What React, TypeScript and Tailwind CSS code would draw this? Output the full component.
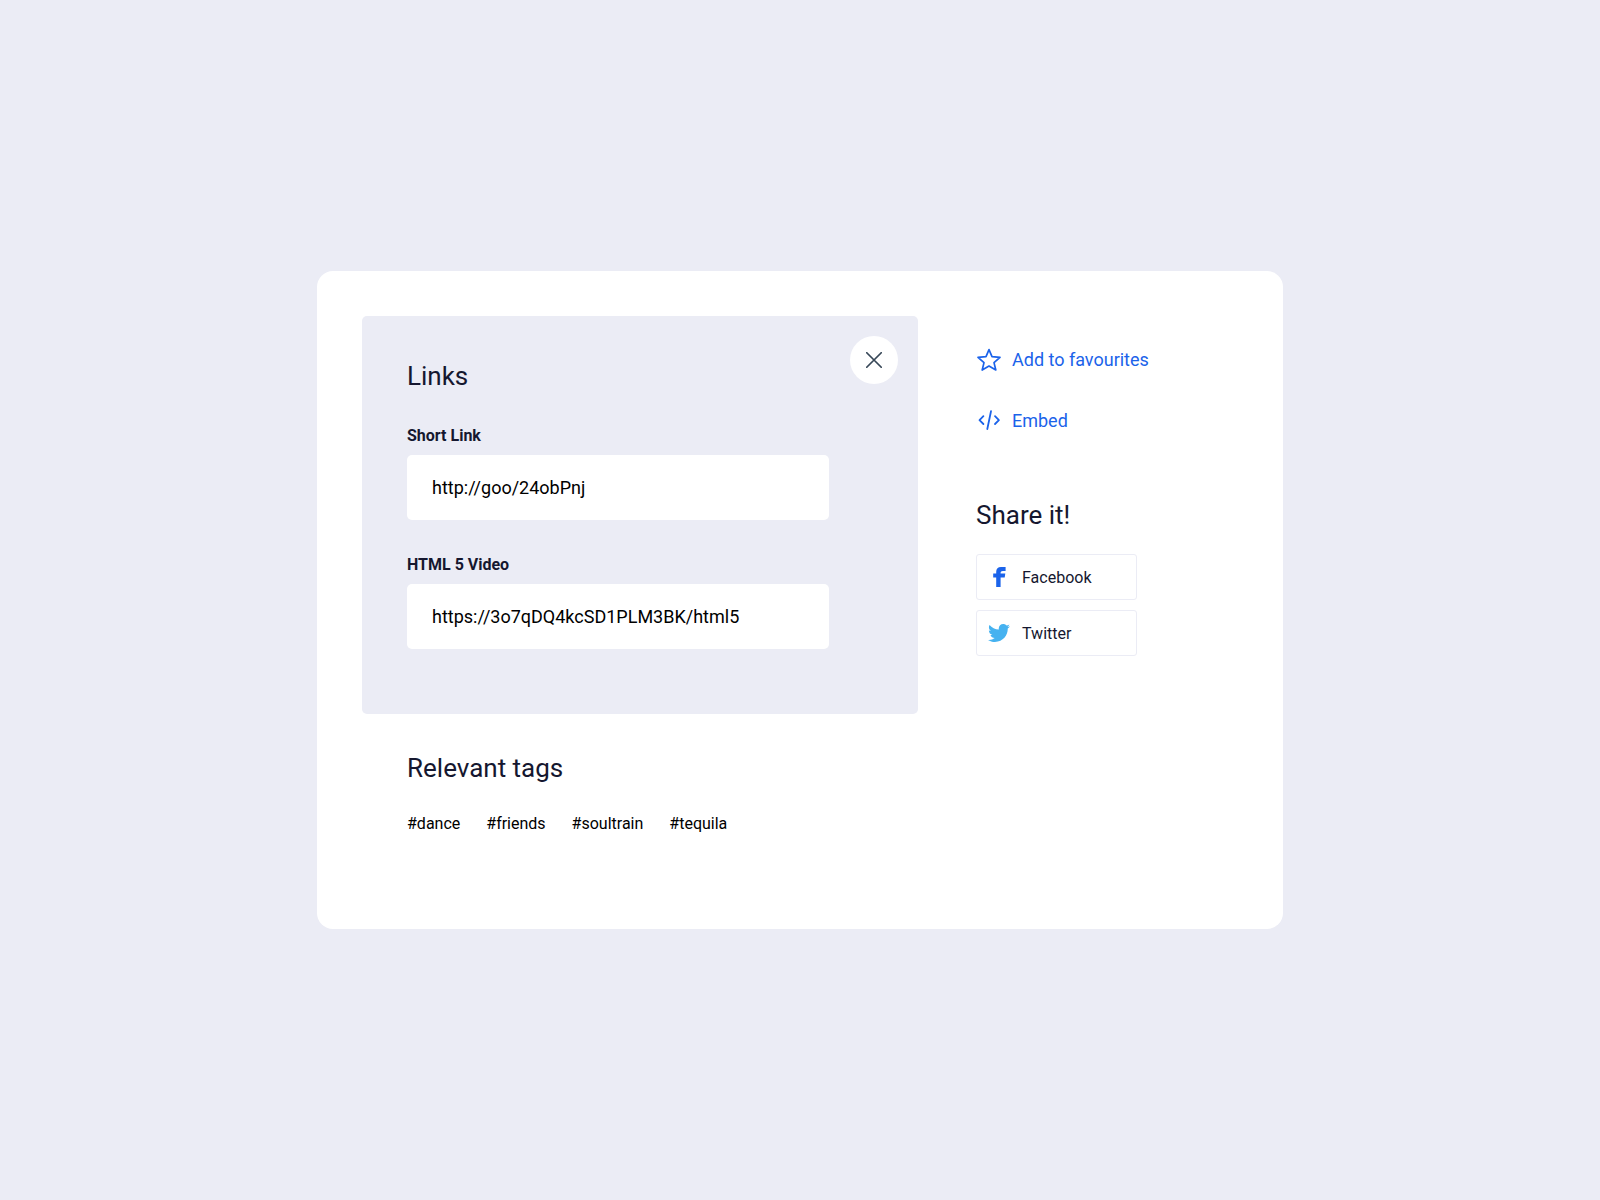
import React from "react";
import { FaTwitter } from "react-icons/fa";

const links = [
  { id: "short-link", label: "Short Link", value: "http://goo/24obPnj" },
  {
    id: "html5-video",
    label: "HTML 5 Video",
    value: "https://3o7qDQ4kcSD1PLM3BK/html5",
  },
];

const tags = ["#dance", "#friends", "#soultrain", "#tequila"];

const StarIcon = () => (
  <svg
    className="h-6 w-[26px]"
    viewBox="0 0 26 24"
    fill="none"
    stroke="currentColor"
    strokeWidth="1.7"
    strokeLinejoin="round"
    aria-hidden="true"
  >
    <path d="M13 1.6l3 7.1 8 .7-6 5.2 1.8 7.4-6.8-3.9L6.2 22 8 14.600 2 9.400l8-.7z" />
  </svg>
);

const CodeIcon = () => (
  <svg
    className="h-6 w-[26px]"
    viewBox="0 0 26 24"
    fill="none"
    stroke="currentColor"
    strokeWidth="1.8"
    strokeLinecap="round"
    strokeLinejoin="round"
    aria-hidden="true"
  >
    <path d="M7.4 7.200L3.500 11.100l3.900 3.900M19 7.200l3.900 3.900-3.900 3.900M15 2.200l-3.700 17.800" />
  </svg>
);

const CloseIcon = () => (
  <svg
    className="h-4 w-4"
    viewBox="0 0 16 16"
    fill="none"
    stroke="currentColor"
    strokeWidth="1.7"
    strokeLinecap="round"
    aria-hidden="true"
  >
    <path d="M.75.75l14.5 14.5M15.25.75L.75 15.25" />
  </svg>
);

const FacebookIcon = () => (
  <svg
    className="h-[22px] w-[22px]"
    viewBox="0 0 22 22"
    fill="currentColor"
    aria-hidden="true"
  >
    <path d="M8.200 21V11.400H5.200V7.600h3V5.800C8.200 2.700 10 1 13 1h4.600v3.900h-2.700c-1.700 0-2.300.7-2.300 2v.7h4.700l-.6 3.800h-4.100V21z" />
  </svg>
);

const Heading = ({ children }: { children: React.ReactNode }) => (
  <h2 className="text-[26px] leading-[30px] text-[#15172f]">{children}</h2>
);

const LinksPanel = () => (
  <section className="relative rounded-[5px] bg-[#ebecf5] px-[45px] pt-[45px] pb-[65px]">
    <button
      type="button"
      aria-label="Close"
      className="absolute top-5 right-5 flex h-12 w-12 items-center justify-center rounded-full bg-white text-[#374757]"
    >
      <CloseIcon />
    </button>
    <Heading>Links</Heading>
    {links.map((link) => (
      <div key={link.id} className="mt-[34px] max-w-[422px]">
        <label
          htmlFor={link.id}
          className="block text-base leading-[21px] font-bold text-[#15172f]"
        >
          {link.label}
        </label>
        <input
          id={link.id}
          type="text"
          readOnly
          defaultValue={link.value}
          className="mt-[9px] block h-[65px] w-full rounded-[5px] bg-white px-[25px] text-lg text-black outline-none"
        />
      </div>
    ))}
  </section>
);

const RelevantTags = () => (
  <section className="mt-[39px] px-[45px]">
    <Heading>Relevant tags</Heading>
    <ul className="mt-[30px] flex flex-wrap gap-x-[26px] gap-y-2">
      {tags.map((tag) => (
        <li key={tag}>
          <a href="#" className="block text-base leading-[21px] text-black">
            {tag}
          </a>
        </li>
      ))}
    </ul>
  </section>
);

const Sidebar = () => (
  <aside className="pt-8">
    <div className="flex flex-col items-start gap-[37px] text-lg leading-6 text-[#1b63ea]">
      <button type="button" className="flex h-6 items-center gap-[10px]">
        <StarIcon />
        Add to favourites
      </button>
      <button type="button" className="flex h-6 items-center gap-[10px]">
        <CodeIcon />
        Embed
      </button>
    </div>

    <div className="mt-[67px]">
      <Heading>Share it!</Heading>
      <div className="mt-6 flex flex-col gap-[10px] text-base leading-[21px] text-[#15172f]">
        <a
          href="#"
          className="flex h-[46px] w-[161px] items-center gap-3 rounded-[3px] border border-[#ebecf5] px-[11px]"
        >
          <span className="text-[#1b63ea]">
            <FacebookIcon />
          </span>
          Facebook
        </a>
        <a
          href="#"
          className="flex h-[46px] w-[161px] items-center gap-3 rounded-[3px] border border-[#ebecf5] px-[11px]"
        >
          <FaTwitter className="h-[22px] w-[22px] text-[#46b2f0]" />
          Twitter
        </a>
      </div>
    </div>
  </aside>
);

export default function App() {
  return (
    <main className="flex min-h-screen items-center justify-center bg-[#ebecf5] font-['Roboto',sans-serif]">
      <div className="flex w-full max-w-[966px] flex-wrap gap-x-[58px] gap-y-8 rounded-2xl bg-white px-[45px] pt-[45px] pb-[95px]">
        <div className="w-full max-w-[556px]">
          <LinksPanel />
          <RelevantTags />
        </div>
        <Sidebar />
      </div>
    </main>
  );
}
